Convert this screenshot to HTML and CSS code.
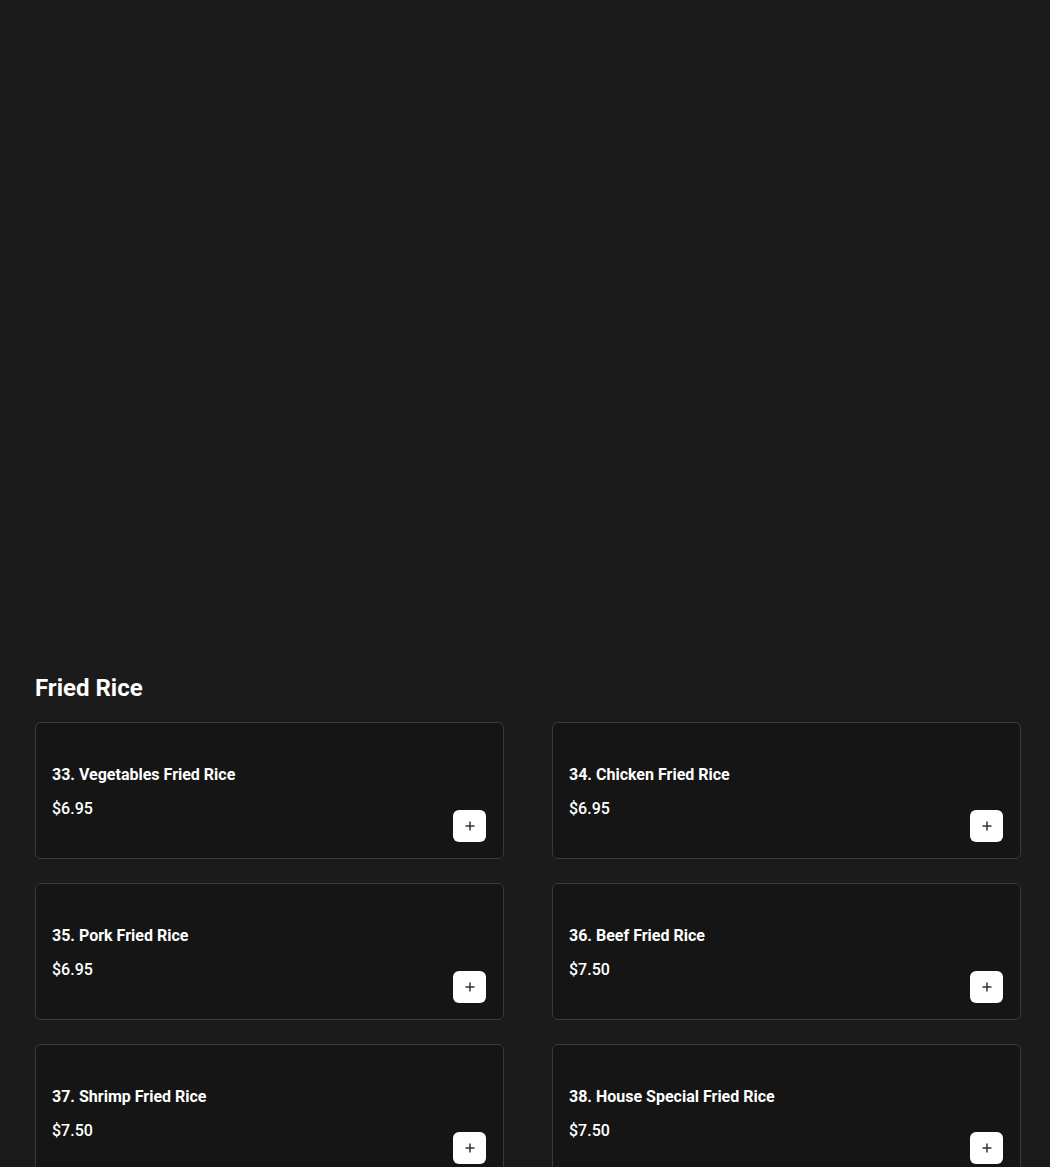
FILE: index.html
```html
<!DOCTYPE html>
<html lang="en">
<head>
  <meta charset="UTF-8">
  <title>Fried Rice</title>
  <link rel="stylesheet" href="styles.css">
</head>
<body>
  <div class="hero"></div>

  <section class="menu-section">
    <h2 class="section-title">Fried Rice</h2>
    <div class="menu-grid">
      <div class="menu-card">
        <h3 class="item-name">33. Vegetables Fried Rice</h3>
        <div class="item-foot">
          <span class="item-price">$6.95</span>
          <button class="add-btn" aria-label="Add"><svg width="10" height="10" viewBox="0 0 10 10"><path d="M5 0.5v9M0.5 5h9" stroke="#333" stroke-width="1.5"/></svg></button>
        </div>
      </div>
      <div class="menu-card">
        <h3 class="item-name">34. Chicken Fried Rice</h3>
        <div class="item-foot">
          <span class="item-price">$6.95</span>
          <button class="add-btn" aria-label="Add"><svg width="10" height="10" viewBox="0 0 10 10"><path d="M5 0.5v9M0.5 5h9" stroke="#333" stroke-width="1.5"/></svg></button>
        </div>
      </div>
      <div class="menu-card">
        <h3 class="item-name">35. Pork Fried Rice</h3>
        <div class="item-foot">
          <span class="item-price">$6.95</span>
          <button class="add-btn" aria-label="Add"><svg width="10" height="10" viewBox="0 0 10 10"><path d="M5 0.5v9M0.5 5h9" stroke="#333" stroke-width="1.5"/></svg></button>
        </div>
      </div>
      <div class="menu-card">
        <h3 class="item-name">36. Beef Fried Rice</h3>
        <div class="item-foot">
          <span class="item-price">$7.50</span>
          <button class="add-btn" aria-label="Add"><svg width="10" height="10" viewBox="0 0 10 10"><path d="M5 0.5v9M0.5 5h9" stroke="#333" stroke-width="1.5"/></svg></button>
        </div>
      </div>
      <div class="menu-card">
        <h3 class="item-name">37. Shrimp Fried Rice</h3>
        <div class="item-foot">
          <span class="item-price">$7.50</span>
          <button class="add-btn" aria-label="Add"><svg width="10" height="10" viewBox="0 0 10 10"><path d="M5 0.5v9M0.5 5h9" stroke="#333" stroke-width="1.5"/></svg></button>
        </div>
      </div>
      <div class="menu-card">
        <h3 class="item-name">38. House Special Fried Rice</h3>
        <div class="item-foot">
          <span class="item-price">$7.50</span>
          <button class="add-btn" aria-label="Add"><svg width="10" height="10" viewBox="0 0 10 10"><path d="M5 0.5v9M0.5 5h9" stroke="#333" stroke-width="1.5"/></svg></button>
        </div>
      </div>
    </div>
  </section>
</body>
</html>
```

FILE: styles.css
```css
body {
  margin: 0;
  font-family: Roboto, "Liberation Sans", sans-serif;
  background: #1b1b1b;
  color: #fff;
}
.hero {
  height: 672px;
}
.menu-section {
  padding: 0 29px 40px 35px;
}
.section-title {
  margin: 0 0 18px;
  font-size: 24px;
  line-height: 32px;
  font-weight: 700;
}
.menu-grid {
  display: grid;
  grid-template-columns: 1fr 1fr;
  column-gap: 48px;
  row-gap: 24px;
}
.menu-card {
  background: #151515;
  border: 1px solid #3a3a3a;
  border-radius: 6px;
  padding: 40px 16px 16px;
}
.item-name {
  margin: 0 0 10px;
  font-size: 16px;
  line-height: 24px;
  font-weight: 700;
}
.item-foot {
  display: flex;
  justify-content: space-between;
  align-items: flex-end;
}
.item-price {
  font-size: 16px;
  line-height: 24px;
  font-weight: 500;
  margin-bottom: 21px;
}
.add-btn {
  width: 33px;
  height: 32px;
  margin-right: 1px;
  border: none;
  border-radius: 6px;
  background: #fff;
  display: flex;
  align-items: center;
  justify-content: center;
  padding: 0;
  cursor: pointer;
}
```
